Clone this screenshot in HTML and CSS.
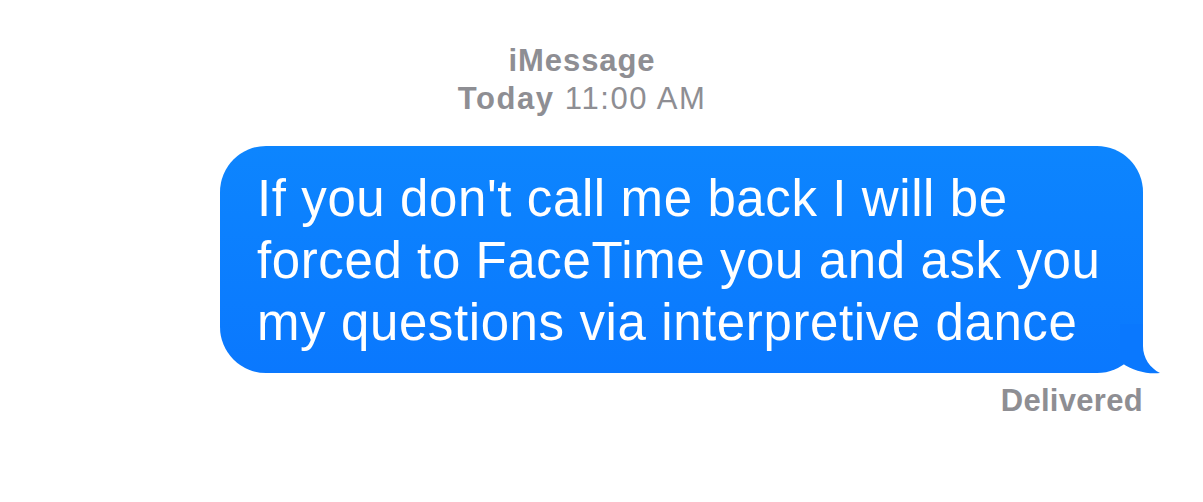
FILE: index.html
```html
<!DOCTYPE html>
<html lang="en">
<head>
    <meta charset="UTF-8">
    <meta name="viewport" content="width=device-width, initial-scale=1.0">
    <title>iMessage</title>
    <link rel="stylesheet" href="styles.css">
</head>
<body>
    <div class="thread">
        <!-- 会话头部 -->
        <div class="thread-header">
            <div class="service">iMessage</div>
            <div class="time"><strong>Today</strong> 11:00 AM</div>
        </div>

        <!-- 发出的消息 -->
        <div class="bubble">
            <p>If you don't call me back I will be<br>
            forced to FaceTime you and ask you<br>
            my questions via interpretive dance</p>
            <svg class="tail" width="40" height="50" viewBox="0 0 40 50">
                <path d="M0 0 L23 0 L23 22 C23 34 30 44 40 49 C28 50.5 13 47 2 39 L0 39 Z" fill="#0a78fe"/>
            </svg>
        </div>

        <div class="status">Delivered</div>
    </div>
</body>
</html>
```
FILE: styles.css
```css
body {
    margin: 0;
    background: #fff;
    font-family: "Liberation Sans", Arial, sans-serif;
}
.thread {
    width: 1164px;
    display: flex;
    flex-direction: column;
    padding-top: 42px;
}
.thread-header {
    text-align: center;
    color: #8e8e93;
    font-size: 31px;
    line-height: 38px;
}
.service {
    font-weight: bold;
    letter-spacing: 0.9px;
}
.time {
    letter-spacing: 1.6px;
}
.time strong {
    font-weight: bold;
}
.bubble {
    position: relative;
    align-self: flex-end;
    margin: 28px 21px 0 0;
    width: 923px;
    box-sizing: border-box;
    padding: 22px 20px 19px 37px;
    border-radius: 46px;
    background: linear-gradient(#0d85fe, #0a78fe);
    color: #fff;
}
.bubble p {
    margin: 0;
    font-size: 51px;
    line-height: 62px;
    letter-spacing: 0.6px;
    white-space: nowrap;
}
.tail {
    position: absolute;
    right: -17px;
    bottom: -1px;
}
.status {
    margin: 9px 21px 0 0;
    text-align: right;
    color: #8e8e93;
    font-size: 31px;
    line-height: 38px;
    font-weight: bold;
    letter-spacing: 0.3px;
}
```
